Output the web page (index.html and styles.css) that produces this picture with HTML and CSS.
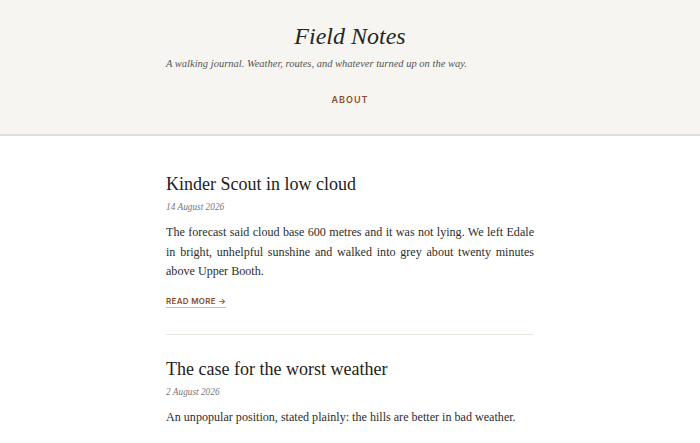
FILE: index.html
```html
<!DOCTYPE html>
<html>

<head>
    <title>Field Notes</title>
    <meta name="viewport" content="width=device-width, initial-scale=1.0">
    <link rel="stylesheet" href="styles.css">
</head>

<body>
    <header class="masthead">
        <h1 class="site-title">Field Notes</h1>
        <p class="tagline">A walking journal. Weather, routes, and whatever turned up on the way.</p>
        <nav class="nav">
            <a href="#">About</a>
        </nav>
    </header>

    <main class="posts">
        <article class="post">
            <h2 class="post-title">Kinder Scout in low cloud</h2>
            <p class="post-date">14 August 2026</p>
            <p class="post-body">The forecast said cloud base 600 metres and it was not lying. We left Edale in bright, unhelpful sunshine and walked into grey about twenty minutes above Upper Booth.</p>
            <a class="read-more" href="#">Read more &rarr;</a>
        </article>

        <article class="post">
            <h2 class="post-title">The case for the worst weather</h2>
            <p class="post-date">2 August 2026</p>
            <p class="post-body">An unpopular position, stated plainly: the hills are better in bad weather.</p>
            <a class="read-more" href="#">Read more &rarr;</a>
        </article>
    </main>
</body>

</html>
```

FILE: styles.css
```css
* {
    margin: 0;
    padding: 0;
    box-sizing: border-box;
}

body {
    background-color: #ffffff;
    color: #2a2a2a;
    font-family: 'Liberation Serif', Georgia, serif;
}

.masthead {
    background-color: #f7f5f1;
    border-bottom: 2px solid #e4ddd5;
    text-align: center;
    padding-top: 22px;
    height: 136px;
}

.site-title {
    font-size: 24px;
    font-style: italic;
    font-weight: normal;
    color: #262626;
    line-height: 28px;
}

/* tagline sits in the same column as the posts */
.tagline {
    width: 368px;
    margin: 6px auto 0;
    text-align: left;
    font-size: 10.5px;
    font-style: italic;
    color: #555;
    line-height: 16px;
}

.nav {
    margin-top: 20px;
    line-height: 12px;
}

.nav a {
    font-family: 'Inter', 'Liberation Sans', sans-serif;
    font-size: 9px;
    font-weight: 600;
    letter-spacing: 1px;
    text-transform: uppercase;
    text-decoration: none;
    color: #8b4c29;
}

.posts {
    width: 368px;
    margin: 0 auto;
    padding-top: 36px;
}

.post {
    padding-bottom: 26px;
    border-bottom: 1px solid #ebe6e0;
    margin-bottom: 22px;
}

.post-title {
    font-size: 18px;
    font-weight: normal;
    line-height: 24px;
    color: #222;
}

.post-date {
    font-size: 9.3px;
    font-style: italic;
    color: #777;
    line-height: 12px;
    margin-top: 5px;
}

.post-body {
    font-size: 12.1px;
    line-height: 19.5px;
    text-align: justify;
    color: #2d2d2d;
    margin-top: 10px;
}

.read-more {
    display: block;
    width: fit-content;
    margin-top: 14px;
    font-family: 'Inter', 'Liberation Sans', sans-serif;
    font-size: 8px;
    font-weight: 600;
    letter-spacing: 0.3px;
    text-transform: uppercase;
    text-decoration: none;
    color: #8b4c29;
    border-bottom: 1px solid #d9b9a3;
    line-height: 11px;
}
```
